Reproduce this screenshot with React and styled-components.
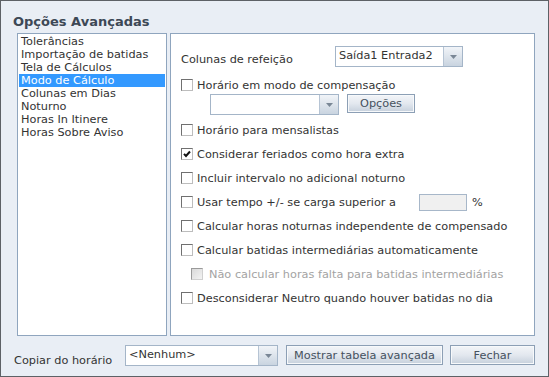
import React from 'react';
import styled, { createGlobalStyle } from 'styled-components';

const GlobalStyle = createGlobalStyle`
  html, body {
    margin: 0;
    padding: 0;
    background: #e9eef5;
  }
  body {
    font-family: "DejaVu Sans", Tahoma, sans-serif;
  }
`;

const listItems = [
  'Tolerâncias',
  'Importação de batidas',
  'Tela de Cálculos',
  'Modo de Cálculo',
  'Colunas em Dias',
  'Noturno',
  'Horas In Itinere',
  'Horas Sobre Aviso',
];

const options = [
  { label: 'Horário para mensalistas' },
  { label: 'Considerar feriados como hora extra', checked: true },
  { label: 'Incluir intervalo no adicional noturno' },
  { label: 'Usar tempo +/- se carga superior a', percent: true },
  { label: 'Calcular horas noturnas independente de compensado' },
  { label: 'Calcular batidas intermediárias automaticamente' },
  { label: 'Não calcular horas falta para batidas intermediárias', disabled: true },
  { label: 'Desconsiderar Neutro quando houver batidas no dia' },
];

function Check({ checked, disabled }) {
  return (
    <Box $disabled={disabled}>
      {checked && (
        <svg width="8" height="8" viewBox="0 0 8 8">
          <polyline points="1,3.8 3,6 7,1.5" fill="none" stroke="#111" strokeWidth="2" />
        </svg>
      )}
    </Box>
  );
}

function Combo({ width, value }) {
  return (
    <ComboBox style={{ width }}>
      <ComboValue>{value}</ComboValue>
      <ComboArrow>
        <svg width="7" height="4" viewBox="0 0 7 4">
          <polygon points="0,0 7,0 3.5,4" fill="#7a8796" />
        </svg>
      </ComboArrow>
    </ComboBox>
  );
}

export default function App() {
  return (
    <>
      <GlobalStyle />
      <Window>
        <Title>Opções Avançadas</Title>
        <Body>
          <List>
            {listItems.map((item, i) => (
              <Item key={item} $selected={i === 3}>{item}</Item>
            ))}
          </List>
          <Panel>
            <MealRow>
              <MealLabel>Colunas de refeição</MealLabel>
              <Combo width={128} value="Saída1 Entrada2" />
            </MealRow>
            <CompRow>
              <Check />
              <span>Horário em modo de compensação</span>
            </CompRow>
            <CompControls>
              <Combo width={129} value="" />
              <Button $width={68} $height={19}>Opções</Button>
            </CompControls>
            <Options>
              {options.map((o) => (
                <CheckRow key={o.label} $indent={o.disabled}>
                  <Check checked={o.checked} disabled={o.disabled} />
                  {o.percent ? (
                    <>
                      <PercentLabel>{o.label}</PercentLabel>
                      <PercentInput />
                      <span>%</span>
                    </>
                  ) : (
                    <Label $disabled={o.disabled}>{o.label}</Label>
                  )}
                </CheckRow>
              ))}
            </Options>
          </Panel>
        </Body>
        <Footer>
          <FooterLabel>Copiar do horário</FooterLabel>
          <Combo width={153} value="<Nenhum>" />
          <Button $width={157} $height={20}>Mostrar tabela avançada</Button>
          <Button $width={85} $height={20}>Fechar</Button>
        </Footer>
      </Window>
    </>
  );
}

const Window = styled.div`
  width: 549px;
  height: 377px;
  box-sizing: border-box;
  border: 1px solid #5d6166;
  background: #e9eef5;
  padding: 0 13px 0 12px;
  display: flex;
  flex-direction: column;
  font-size: 11.3px;
  color: #333;
`;

const Title = styled.div`
  margin-top: 13px;
  margin-bottom: 3px;
  height: 16px;
  line-height: 16px;
  font-size: 13px;
  font-weight: bold;
  color: #3d4856;
`;

const Body = styled.div`
  display: flex;
  gap: 3px;
  height: 303px;
  margin-left: 4px;
`;

const List = styled.ul`
  width: 150px;
  box-sizing: border-box;
  margin: 0;
  padding: 1px 1px 0;
  list-style: none;
  background: #fff;
  border: 1px solid #8fa5be;
`;

const Item = styled.li`
  height: 13px;
  line-height: 13px;
  padding-left: 2px;
  white-space: nowrap;
  background: ${(p) => (p.$selected ? '#3399ff' : 'transparent')};
  color: ${(p) => (p.$selected ? '#fff' : '#333')};
`;

const Panel = styled.div`
  flex: 1;
  box-sizing: border-box;
  background: #fff;
  border: 1px solid #8fa5be;
  padding: 12px 0 0 10px;
  display: flex;
  flex-direction: column;
`;

const MealRow = styled.div`
  display: flex;
  align-items: flex-end;
  height: 21px;
`;

const MealLabel = styled.span`
  width: 154px;
  line-height: 13px;
  padding-bottom: 1px;
`;

const CompRow = styled.div`
  display: flex;
  align-items: center;
  gap: 4px;
  height: 16px;
  margin-top: 10px;
`;

const CompControls = styled.div`
  display: flex;
  align-items: flex-start;
  gap: 8px;
  height: 20px;
  margin-top: 1px;
  padding-left: 29px;
`;

const Options = styled.div`
  margin-top: 4px;
  display: flex;
  flex-direction: column;
`;

const CheckRow = styled.div`
  display: flex;
  align-items: center;
  gap: ${(p) => (p.$indent ? '6px' : '4px')};
  height: 24px;
  padding-left: ${(p) => (p.$indent ? '10px' : '0')};
`;

const Label = styled.span`
  white-space: nowrap;
  color: ${(p) => (p.$disabled ? '#a3a3a3' : '#333')};
`;

const Box = styled.span`
  width: 12px;
  height: 12px;
  box-sizing: border-box;
  flex: none;
  display: flex;
  align-items: center;
  justify-content: center;
  border: 1px solid;
  border-color: #707070 #bdbdbd #bdbdbd #707070;
  background: ${(p) => (p.$disabled ? 'linear-gradient(135deg, #d9d9d9, #f3f3f3)' : '#fff')};
  ${(p) => p.$disabled && 'border-color: #9a9a9a #d0d0d0 #d0d0d0 #9a9a9a;'}
`;

const PercentLabel = styled.span`
  width: 218px;
  white-space: nowrap;
`;

const PercentInput = styled.span`
  width: 48px;
  height: 17px;
  box-sizing: border-box;
  border: 1px solid #a7b7c9;
  background: #f0f0f0;
  margin-right: 1px;
`;

const ComboBox = styled.div`
  height: 21px;
  box-sizing: border-box;
  display: flex;
  background: #fff;
  border: 1px solid #a4b5c8;
  flex: none;
`;

const ComboValue = styled.span`
  flex: 1;
  padding-left: 3px;
  line-height: 18px;
  white-space: nowrap;
  color: #333;
`;

const ComboArrow = styled.span`
  width: 18px;
  display: flex;
  align-items: center;
  justify-content: center;
  border-left: 1px solid #b6c4d4;
  background: linear-gradient(#f1f4f8, #c9d4e0);
`;

const Button = styled.div`
  width: ${(p) => p.$width}px;
  height: ${(p) => p.$height}px;
  box-sizing: border-box;
  flex: none;
  display: flex;
  align-items: center;
  justify-content: center;
  border: 1px solid #8c9fb5;
  box-shadow: inset 0 0 0 1px #f7f9fb;
  background: linear-gradient(#f3f5f8 0%, #e3e8ef 50%, #c6d0dc 100%);
  color: #45515e;
  white-space: nowrap;
`;

const Footer = styled.div`
  display: flex;
  align-items: flex-start;
  height: 21px;
  margin-top: 9px;
  gap: 8px;
  padding-left: 1px;

  & > :nth-child(4) {
    margin-left: -1px;
  }
`;

const FooterLabel = styled.span`
  width: 103px;
  padding-top: 9px;
  line-height: 13px;
  white-space: nowrap;
`;
